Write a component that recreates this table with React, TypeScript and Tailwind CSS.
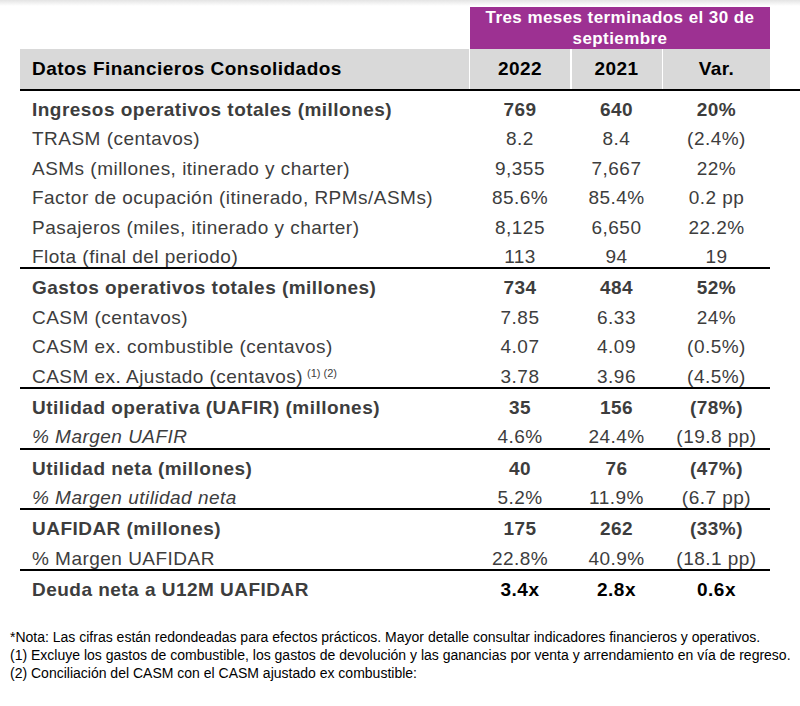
type Row = {
  label: string;
  values: [string, string, string];
  bold?: boolean;
  italic?: boolean;
  sup?: string;
  dark?: boolean;
};

const sections: Row[][] = [
  [
    { label: "Ingresos operativos totales (millones)", values: ["769", "640", "20%"], bold: true },
    { label: "TRASM (centavos)", values: ["8.2", "8.4", "(2.4%)"] },
    { label: "ASMs (millones, itinerado y charter)", values: ["9,355", "7,667", "22%"] },
    { label: "Factor de ocupación (itinerado, RPMs/ASMs)", values: ["85.6%", "85.4%", "0.2 pp"] },
    { label: "Pasajeros (miles, itinerado y charter)", values: ["8,125", "6,650", "22.2%"] },
    { label: "Flota (final del periodo)", values: ["113", "94", "19"] },
  ],
  [
    { label: "Gastos operativos totales (millones)", values: ["734", "484", "52%"], bold: true },
    { label: "CASM (centavos)", values: ["7.85", "6.33", "24%"] },
    { label: "CASM ex. combustible (centavos)", values: ["4.07", "4.09", "(0.5%)"] },
    { label: "CASM ex. Ajustado (centavos)", values: ["3.78", "3.96", "(4.5%)"], sup: "(1) (2)" },
  ],
  [
    { label: "Utilidad operativa (UAFIR) (millones)", values: ["35", "156", "(78%)"], bold: true },
    { label: "% Margen UAFIR", values: ["4.6%", "24.4%", "(19.8 pp)"], italic: true },
  ],
  [
    { label: "Utilidad neta (millones)", values: ["40", "76", "(47%)"], bold: true },
    { label: "% Margen utilidad neta", values: ["5.2%", "11.9%", "(6.7 pp)"], italic: true },
  ],
  [
    { label: "UAFIDAR (millones)", values: ["175", "262", "(33%)"], bold: true },
    { label: "% Margen UAFIDAR", values: ["22.8%", "40.9%", "(18.1 pp)"] },
  ],
  [{ label: "Deuda neta a U12M UAFIDAR", values: ["3.4x", "2.8x", "0.6x"], bold: true, dark: true }],
];

const cols = "grid grid-cols-[448.5px_100px_90px_107px] gap-x-[1.5px]";

function DataRow({ row }: { row: Row }) {
  return (
    <div className={`${cols} h-[29.4px] pt-[8px] text-[19px] leading-[21px] tracking-wide text-[#3d3d3d]`}>
      <div className={`pl-3 whitespace-nowrap ${row.bold ? "font-bold" : ""} ${row.italic ? "italic" : ""}`}>
        {row.label}
        {row.sup ? <sup className="ml-1 text-[11px] tracking-normal">{row.sup}</sup> : null}
      </div>
      {row.values.map((value, i) => (
        <div
          key={i}
          className={`text-center whitespace-nowrap ${row.bold ? "font-bold" : ""} ${row.dark ? "text-black" : ""}`}
        >
          {value}
        </div>
      ))}
    </div>
  );
}

export default function App() {
  return (
    <div className="min-h-[706px] w-[800px] bg-white font-['Liberation_Sans',Arial,sans-serif]">
      <div className="h-[6px] bg-gradient-to-b from-[#e4e4e4] to-white" />
      <div className="pl-5 pt-px">
        <div className={cols}>
          <div className="col-start-2 col-span-3 bg-[#9d3192] text-center text-[17px] font-bold leading-[21px] tracking-wide text-white">
            Tres meses terminados el 30 de
            <br />
            septiembre
          </div>
        </div>
        <div className={`${cols} h-[42px] items-stretch border-b-2 border-black text-[19px] font-bold tracking-wide text-black`}>
          <div className="flex items-center bg-[#d9d9d9] pl-3">Datos Financieros Consolidados</div>
          <div className="flex items-center justify-center bg-[#d9d9d9]">2022</div>
          <div className="flex items-center justify-center bg-[#d9d9d9]">2021</div>
          <div className="flex items-center justify-center bg-[#d9d9d9]">Var.</div>
        </div>
        {sections.map((section, i) => (
          <div
            key={i}
            className={`w-[750px] ${i < sections.length - 1 ? "border-b-2 border-black" : ""}`}
          >
            {section.map((row) => (
              <DataRow key={row.label} row={row} />
            ))}
          </div>
        ))}
      </div>
      <div className="mt-[27px] pl-[10px] text-[14px] leading-[18px] text-black">
        <p>*Nota: Las cifras están redondeadas para efectos prácticos. Mayor detalle consultar indicadores financieros y operativos.</p>
        <p>(1) Excluye los gastos de combustible, los gastos de devolución y las ganancias por venta y arrendamiento en vía de regreso.</p>
        <p>(2) Conciliación del CASM con el CASM ajustado ex combustible:</p>
      </div>
    </div>
  );
}
